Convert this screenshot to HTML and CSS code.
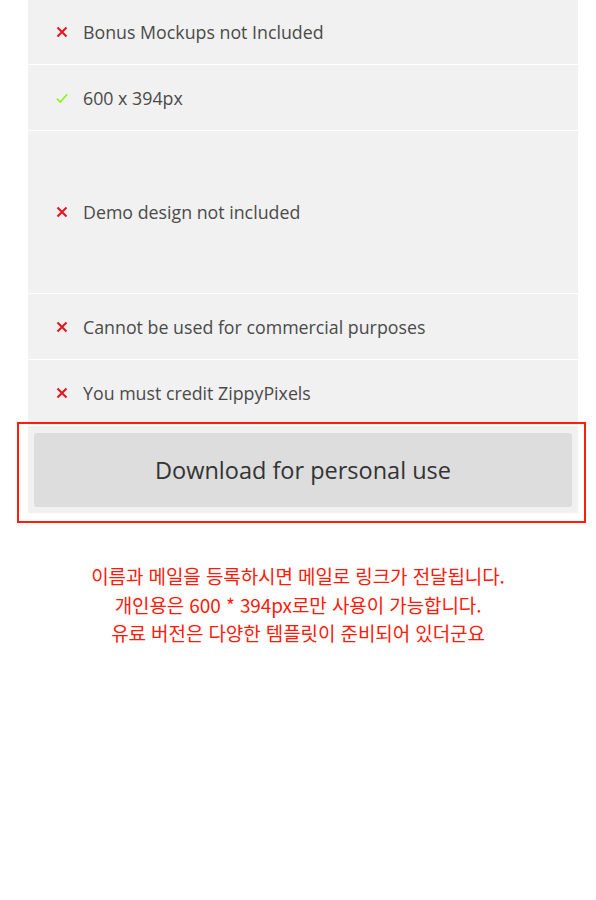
FILE: index.html
```html
<!DOCTYPE html>
<html lang="ko">
<head>
  <meta charset="UTF-8">
  <meta name="viewport" content="width=device-width, initial-scale=1.0">
  <title>Personal license</title>
  <link rel="stylesheet" href="styles.css">
</head>
<body>
  <div class="plan">
    <ul class="features">
      <li class="first">
        <span class="icon"><svg width="12" height="12" viewBox="0 0 12 12"><path d="M1.5 1.5 L10.5 10.5 M10.5 1.5 L1.5 10.5" stroke="#e8131b" stroke-width="2"/></svg></span>Bonus Mockups not Included
      </li>
      <li>
        <span class="icon"><svg width="12" height="12" viewBox="0 0 12 12"><path d="M0.8 6.6 L4.3 10 L11.2 2.2" fill="none" stroke="#8cf218" stroke-width="1.6"/></svg></span>600 x 394px
      </li>
      <li class="tall">
        <span class="icon"><svg width="12" height="12" viewBox="0 0 12 12"><path d="M1.5 1.5 L10.5 10.5 M10.5 1.5 L1.5 10.5" stroke="#e8131b" stroke-width="2"/></svg></span>Demo design not included
      </li>
      <li>
        <span class="icon"><svg width="12" height="12" viewBox="0 0 12 12"><path d="M1.5 1.5 L10.5 10.5 M10.5 1.5 L1.5 10.5" stroke="#e8131b" stroke-width="2"/></svg></span>Cannot be used for commercial purposes
      </li>
      <li>
        <span class="icon"><svg width="12" height="12" viewBox="0 0 12 12"><path d="M1.5 1.5 L10.5 10.5 M10.5 1.5 L1.5 10.5" stroke="#e8131b" stroke-width="2"/></svg></span>You must credit ZippyPixels
      </li>
    </ul>
    <div class="download">
      <a class="btn" href="#">Download for personal use</a>
    </div>
  </div>

  <p class="note">
    이름과 메일을 등록하시면 메일로 링크가 전달됩니다.<br>
    개인용은 600 * 394px로만 사용이 가능합니다.<br>
    유료 버전은 다양한 템플릿이 준비되어 있더군요
  </p>
</body>
</html>
```

FILE: styles.css
```css
/* general */
body {
  margin: 0;
  font-family: 'Open Sans', 'Noto Sans CJK KR', sans-serif;
  background: #fff;
}

/* panel */
.plan {
  width: 550px;
  margin-left: 28px;
  background-color: #f1f1f1;
}

.features {
  list-style: none;
  margin: 0;
  padding: 0;
}

.features li {
  display: flex;
  align-items: center;
  height: 65px;
  padding-left: 28px;
  border-bottom: 1px solid #fff;
  font-size: 17.8px;
  color: #4a4a4a;
}

.features li.first {
  height: 64px;
}

.features li.tall {
  height: 162px;
}

.icon {
  width: 12px;
  margin-right: 15px;
  display: flex;
  align-items: center;
}

/* download button */
.download {
  position: relative;
  padding: 7px 6px 6px;
}

/* red highlight box */
.download::after {
  content: "";
  position: absolute;
  top: -4px;
  left: -11px;
  right: -8px;
  bottom: -10px;
  border: 2px solid #ff1e0a;
}

.btn {
  display: flex;
  align-items: center;
  justify-content: center;
  height: 74px;
  background-color: #dddddd;
  border-radius: 3px;
  color: #333;
  font-size: 23.5px;
  text-decoration: none;
}

/* note */
.note {
  margin: 49px 0 0;
  text-align: center;
  font-family: 'Noto Sans CJK KR', sans-serif;
  font-size: 19px;
  line-height: 28.5px;
  color: #ff1a0a;
  letter-spacing: -0.1px;
}
```
